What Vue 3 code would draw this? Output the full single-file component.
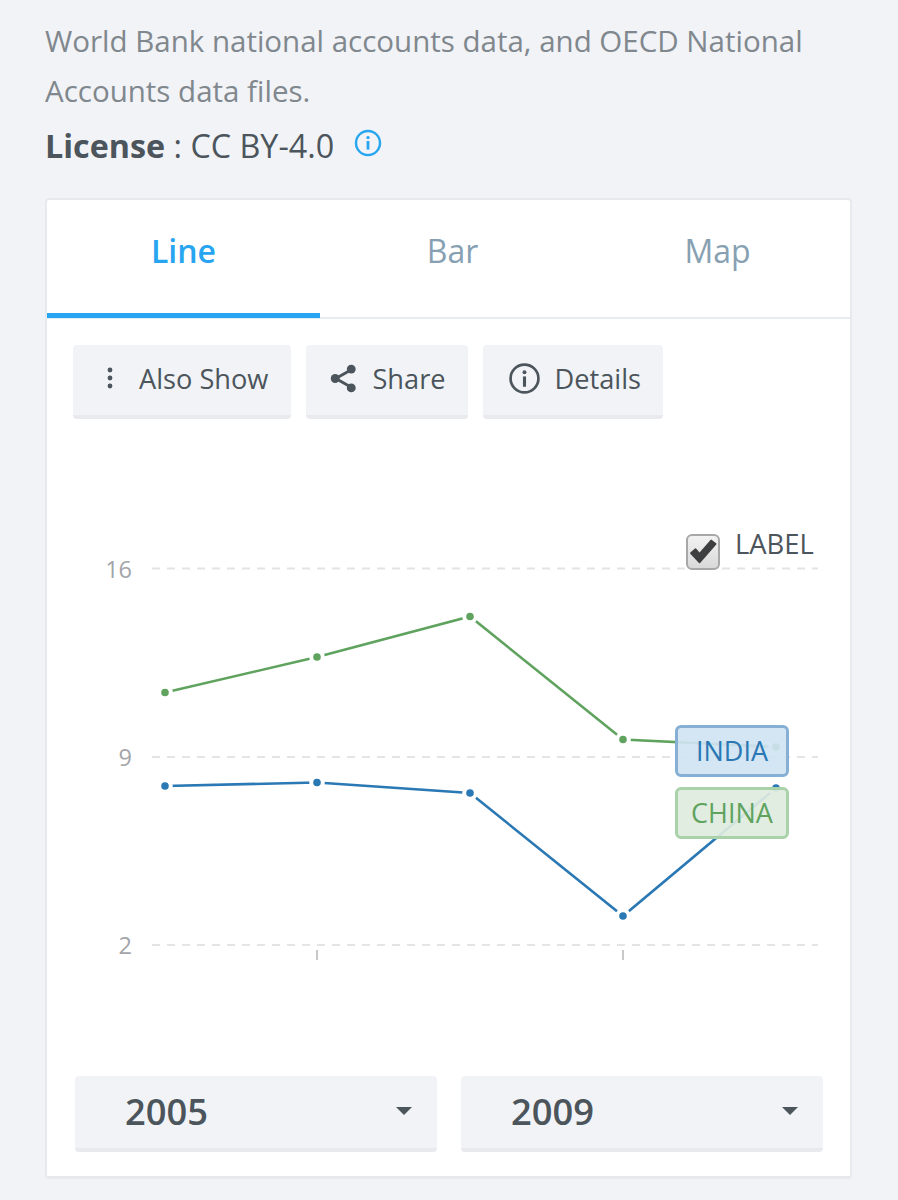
<template>
  <div class="page">
    <p class="source">World Bank national accounts data, and OECD National Accounts data files.</p>
    <div class="license">
      <b>License</b> : CC BY-4.0
      <svg class="license-info" width="28" height="28" viewBox="0 0 28 28">
        <circle cx="14" cy="14" r="12" fill="none" stroke="#27a5f0" stroke-width="2.4" />
        <circle cx="14" cy="8.6" r="1.7" fill="#27a5f0" />
        <rect x="12.6" y="12" width="2.8" height="8.6" fill="#27a5f0" />
      </svg>
    </div>

    <div class="card">
      <div class="tabs">
        <div
          v-for="tab in tabs"
          :key="tab"
          class="tab"
          :class="{ active: tab === 'Line' }"
        >
          {{ tab }}
        </div>
      </div>

      <div class="actions">
        <div class="action also">
          <svg width="10" height="26" viewBox="0 0 10 26">
            <circle cx="5" cy="5" r="2.4" fill="#4c555b" />
            <circle cx="5" cy="13" r="2.4" fill="#4c555b" />
            <circle cx="5" cy="21" r="2.4" fill="#4c555b" />
          </svg>
          <span>Also Show</span>
        </div>
        <div class="action share">
          <svg width="29" height="31" viewBox="0 0 26 28">
            <path d="M20 6 L6 14 L20 22" fill="none" stroke="#4c555b" stroke-width="2.6" />
            <circle cx="20" cy="5.5" r="4" fill="#4c555b" />
            <circle cx="5.5" cy="14" r="4" fill="#4c555b" />
            <circle cx="20" cy="22.5" r="4" fill="#4c555b" />
          </svg>
          <span>Share</span>
        </div>
        <div class="action details">
          <svg width="33" height="33" viewBox="0 0 32 32">
            <circle cx="16" cy="16" r="13.5" fill="none" stroke="#4c555b" stroke-width="2.6" />
            <circle cx="16" cy="10" r="1.9" fill="#4c555b" />
            <rect x="14.5" y="14" width="3" height="10" fill="#4c555b" />
          </svg>
          <span>Details</span>
        </div>
      </div>

      <div class="chart">
        <svg class="plot" width="804" height="657" viewBox="47 419 804 657">
          <g v-for="y in gridLines" :key="y.value">
            <line x1="152" x2="818" :y1="y.pos" :y2="y.pos" class="grid" />
            <text x="132" :y="y.pos + 9" text-anchor="end" class="axis-text">{{ y.value }}</text>
          </g>
          <line x1="317" x2="317" y1="950" y2="960" class="tick" />
          <line x1="623" x2="623" y1="950" y2="960" class="tick" />
          <g v-for="s in series" :key="s.name">
            <polyline :points="toPoints(s.points)" fill="none" :stroke="s.color" stroke-width="2.6" />
            <circle
              v-for="p in s.points"
              :key="p[0]"
              :cx="p[0]"
              :cy="p[1]"
              r="3.8"
              :fill="s.color"
              stroke="#fff"
              stroke-width="8"
              paint-order="stroke"
            />
          </g>
        </svg>

        <div class="label-toggle">
          <span class="checkbox">
            <svg width="30" height="28" viewBox="0 0 26 24">
              <path d="M2.5 13 L10 21 L24 5 L20 2 L10 13.5 L6.5 9.5 Z" fill="#3d3f41" stroke="#3d3f41" stroke-width="1.4" stroke-linejoin="round" />
            </svg>
          </span>
          <span class="label-text">LABEL</span>
        </div>
        <div class="chip chip-india">INDIA</div>
        <div class="chip chip-china">CHINA</div>
      </div>

      <div class="selects">
        <div v-for="year in years" :key="year" class="select">
          <span>{{ year }}</span>
          <i class="caret"></i>
        </div>
      </div>
    </div>
  </div>
</template>

<script setup>
const tabs = ["Line", "Bar", "Map"];
const years = [2005, 2009];

const gridLines = [
  { value: 16, pos: 568.5 },
  { value: 9, pos: 757 },
  { value: 2, pos: 945 },
];

// coordinates follow the viewBox of the plot
const series = [
  {
    name: "China",
    color: "#5fa35f",
    points: [[165, 692.5], [317, 657], [470, 616.5], [623, 739.5], [776, 747]],
  },
  {
    name: "India",
    color: "#2a78b4",
    points: [[165, 786], [317, 782.5], [470, 793], [623, 916], [776, 788]],
  },
];

function toPoints(points) {
  return points.map((p) => p.join(",")).join(" ");
}
</script>

<style>
body {
  background: #f1f3f7;
}
</style>

<style scoped>
.page {
  height: 1200px;
  box-sizing: border-box;
  padding: 16px 46px 0 45px;
  font-family: "Open Sans", sans-serif;
  overflow: hidden;
}

.source {
  margin: 0;
  font-size: 29.5px;
  line-height: 50px;
  color: #80878d;
}

.license {
  display: flex;
  align-items: center;
  height: 57px;
  font-size: 32.3px;
  color: #4c555b;
  white-space: pre;
}

.license b {
  font-weight: 700;
}

.license-info {
  margin-left: 11px;
  margin-top: -3px;
}

.card {
  box-sizing: border-box;
  height: 981px;
  margin-top: 25px;
  background: #fff;
  border: 2px solid #e6e9ee;
  border-bottom-width: 3px;
  border-radius: 4px;
}

.tabs {
  display: flex;
  height: 119px;
  box-sizing: border-box;
  border-bottom: 2px solid #e8ebef;
}

.tab {
  flex: 1;
  height: 117px;
  box-sizing: border-box;
  padding-top: 28px;
  text-align: center;
  font-size: 32px;
  line-height: 46px;
  color: #87a1b3;
}

.tab.active {
  flex: 0 0 273px;
  height: 118px;
  color: #27a5f0;
  font-weight: 600;
  border-bottom: 5px solid #27a5f0;
}

.actions {
  display: flex;
  gap: 15px;
  padding: 26px 0 0 26px;
}

.action {
  display: flex;
  align-items: center;
  gap: 14px;
  height: 74px;
  box-sizing: border-box;
  padding: 0 22px 4px 25px;
  background: #f1f3f7;
  border-bottom: 4px solid #e8eaee;
  border-radius: 4px;
  font-size: 27.2px;
  color: #4c555b;
}

.action svg {
  flex: none;
}

.action.also {
  gap: 24px;
  padding-left: 32px;
  padding-right: 23px;
}

.action.share {
  padding-left: 23px;
  padding-right: 22px;
}

.chart {
  position: relative;
  height: 657px;
}

.plot {
  display: block;
}

.grid {
  stroke: #e2e4e6;
  stroke-width: 2;
  stroke-dasharray: 8 7;
}

.tick {
  stroke: #c8c8c8;
  stroke-width: 2;
}

.axis-text {
  font-size: 23.5px;
  fill: #a3a5a8;
}

.label-toggle {
  position: absolute;
  left: 639px;
  top: 107px;
  display: flex;
  gap: 15px;
}

.checkbox {
  display: flex;
  align-items: center;
  justify-content: center;
  width: 34px;
  height: 36px;
  margin-top: 8px;
  box-sizing: border-box;
  background: linear-gradient(#f2f2f2, #d9d9d9);
  border: 2px solid #a8a8a8;
  border-radius: 6px;
}

.label-text {
  font-size: 27.4px;
  line-height: 36px;
  color: #4c555b;
}

.chip {
  position: absolute;
  left: 628px;
  width: 114px;
  height: 52px;
  box-sizing: border-box;
  border-radius: 6px;
  border: 3px solid;
  text-align: center;
  font-size: 27px;
  line-height: 45px;
}

.chip-india {
  top: 306px;
  color: #2a78b4;
  background: rgba(208, 227, 242, 0.92);
  border-color: #86b0d3;
}

.chip-china {
  top: 368px;
  color: #5fa35f;
  background: rgba(223, 235, 223, 0.92);
  border-color: #a9d2a9;
}

.selects {
  display: flex;
  gap: 24px;
  padding-left: 28px;
}

.select {
  display: flex;
  align-items: center;
  justify-content: space-between;
  width: 362px;
  height: 76px;
  box-sizing: border-box;
  padding: 0 25px 2px 50px;
  background: #f1f3f7;
  border-bottom: 4px solid #e8eaee;
  border-radius: 4px;
  font-size: 36.3px;
  font-weight: 600;
  color: #4c555b;
}

.caret {
  width: 0;
  height: 0;
  border-left: 8px solid transparent;
  border-right: 8px solid transparent;
  border-top: 8px solid #4c555b;
}
</style>
